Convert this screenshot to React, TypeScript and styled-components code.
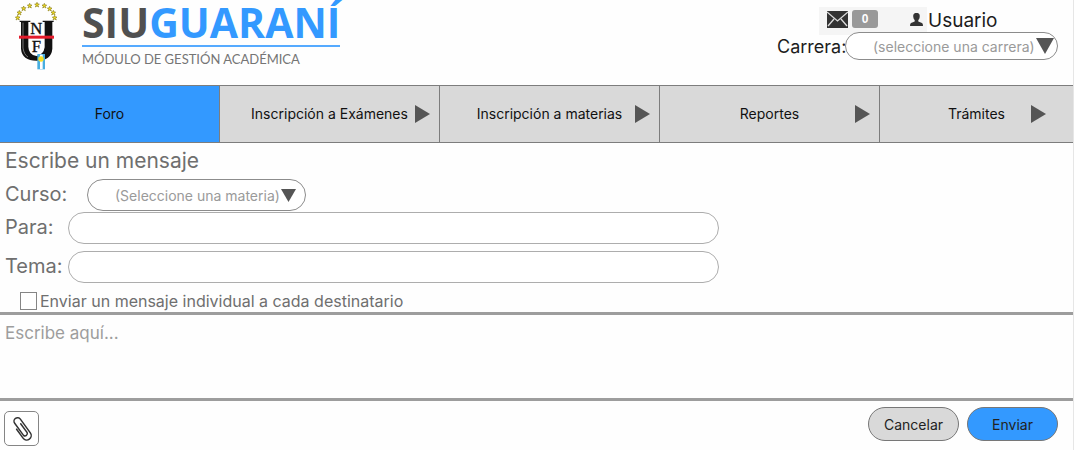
import React from "react";
import styled, { createGlobalStyle } from "styled-components";

const Global = createGlobalStyle`
  *, *::before, *::after { box-sizing: border-box; }
  body { margin: 0; background: #fefefe; font-family: Inter, "Liberation Sans", sans-serif; }
  button, input, select, textarea { font: inherit; color: inherit; }
`;

const Page = styled.div`
  min-height: 100vh;
  display: flex;
  flex-direction: column;
  border-right: 1px solid #e6e6e6;
  color: #6f6f6f;
`;

const Header = styled.header`
  display: flex;
  justify-content: space-between;
  align-items: flex-start;
  min-height: 85px;
  padding-right: 15px;
`;

const Brand = styled.a`
  display: flex;
  gap: 12px;
  padding-left: 10px;
  color: #505050;
  text-decoration: none;
`;

const BrandText = styled.div`
  font-family: "Open Sans", sans-serif;
`;

const BrandName = styled.div`
  font-size: 41px;
  font-weight: 700;
  line-height: 45px;
  border-bottom: 2px solid #55aaff;
  span { color: #3399ff; }
`;

const BrandCaption = styled.div`
  font-family: Lato, sans-serif;
  font-size: 13px;
  line-height: 24px;
  color: #757575;
`;

const Account = styled.div`
  padding-top: 7px;
  color: #1c1c1c;
  font-size: 18px;
`;

const UserRow = styled.div`
  display: flex;
  align-items: center;
  padding-left: 42px;
`;

const Status = styled.div`
  display: flex;
  align-items: center;
  gap: 4px;
  width: 108px;
  height: 28px;
  padding: 0 4px 4px 8px;
  background: #f5f5f5;
  color: #333;
`;

const Badge = styled.span`
  width: 26px;
  border-radius: 3px;
  background: #999;
  color: #fff;
  font-family: "Liberation Sans", sans-serif;
  font-size: 12px;
  font-weight: 700;
  line-height: 18px;
  text-align: center;
`;

const UserIcon = styled.svg`
  margin-left: auto;
`;

const UserLink = styled.a`
  padding-left: 1px;
  font-size: 19px;
  line-height: 26px;
  color: inherit;
  text-decoration: none;
`;

const CareerRow = styled.div`
  display: flex;
  align-items: center;
  margin-top: -3px;
  label { width: 68px; }
`;

const SelectBox = styled.div<{ $width: number; $height: number; $inset: number }>`
  display: grid;
  align-items: center;
  width: ${(p) => p.$width}px;
  height: ${(p) => p.$height}px;
  > * { grid-area: 1 / 1; }
  > svg { justify-self: end; margin-right: ${(p) => p.$inset}px; pointer-events: none; }
`;

const Select = styled.select`
  appearance: none;
  width: 100%;
  height: 100%;
  padding: 0 20px 0 27px;
  border: 1px solid #8c8c8c;
  border-radius: 16px;
  background: #fff;
  color: #9a9a9a;
  font-size: 14px;
`;

const Nav = styled.nav`
  display: grid;
  grid-template-columns: 220fr 220fr 220fr 220fr 193fr;
  border: solid #7d7d7d;
  border-width: 1px 0;
`;

const Tab = styled.button<{ $active?: boolean; $inset?: number }>`
  display: grid;
  grid-template-columns: 1fr auto 1fr;
  align-items: center;
  height: 56px;
  padding: 0;
  border: 0;
  border-right: 1px solid #7d7d7d;
  background: ${(p) => (p.$active ? "#3399ff" : "#d9d9d9")};
  color: #111;
  font-size: 14px;
  span { grid-column: 2; padding-bottom: 2px; }
  svg { justify-self: end; margin-right: ${(p) => p.$inset ?? 9}px; }
  &:last-child { border-right: 0; }
`;

const Form = styled.form`
  flex: 1;
  display: flex;
  flex-direction: column;
`;

const Title = styled.h1`
  margin: 6px 0;
  padding-left: 5px;
  font-size: 21px;
  font-weight: 400;
  line-height: 24px;
`;

const Field = styled.div<{ $label: number; $gap: number }>`
  display: flex;
  align-items: center;
  height: 32px;
  margin-bottom: ${(p) => p.$gap}px;
  padding-left: 5px;
  font-size: 20px;
  label { width: ${(p) => p.$label}px; padding-bottom: 2px; }
`;

const TextInput = styled.input`
  flex: 1;
  max-width: 651px;
  height: 32px;
  padding: 0 16px;
  border: 1px solid #adadad;
  border-radius: 16px;
  background: #fff;
  font-size: 16px;
`;

const CheckRow = styled.div`
  display: flex;
  align-items: center;
  gap: 3px;
  padding: 0 0 2px 20px;
  font-size: 16px;
  line-height: 18px;
`;

const Checkbox = styled.input`
  appearance: none;
  width: 17px;
  height: 18px;
  margin: 0;
  border: 1px solid #858585;
  background: #fff;
  &:checked { background: #3399ff; }
`;

const Message = styled.textarea`
  flex: 1;
  min-height: 89px;
  padding: 6px 5px;
  border: solid #9d9d9d;
  border-width: 3px 0;
  background: transparent;
  font-size: 17px;
  line-height: 24px;
  resize: none;
  &::placeholder { color: #9d9d9d; }
`;

const Actions = styled.footer`
  display: flex;
  gap: 8px;
  padding: 6px 15px 4px 4px;
`;

const AttachButton = styled.button`
  display: grid;
  place-items: center;
  align-self: flex-end;
  width: 35px;
  height: 35px;
  margin: 4px auto 0 0;
  padding: 0;
  border: 1px solid #858585;
  border-radius: 5px;
  background: #fff;
`;

const PillButton = styled.button<{ $primary?: boolean }>`
  width: 91px;
  height: 34px;
  padding: 0;
  border: 1px solid #777;
  border-radius: 17px;
  background: ${(p) => (p.$primary ? "#3399ff" : "#d9d9d9")};
  color: #222;
  font-size: 14px;
`;

const stars = [
  [23, 53], [28, 38], [41, 25], [59, 17], [81, 14], [103, 17], [119, 26], [130, 38], [134, 53],
];

const Emblem = () => (
  <svg width="60" height="76" viewBox="0 0 180 228" aria-hidden="true">
    {stars.map(([x, y]) => (
      <path
        key={x}
        transform={`translate(${x} ${y})`}
        d="M0-7L2-2L7-2L3 2L5 7L0 4L-5 7L-3 2L-7-2L-2-2Z"
        fill="#ecd820"
        stroke="#8f8420"
        strokeWidth="2"
      />
    ))}
    <path
      d="M29 62H61V66H55V140Q56 164 79 168Q101 164 104 142V66H98V62H131V66H127V146Q124 182 80 182Q36 182 33 146V66H29Z"
      fill="#111"
    />
    <path d="M39 68V144Q42 164 54 171" fill="none" stroke="#777" strokeWidth="3" />
    <g fill="#111" stroke="#111" strokeWidth="1" fontFamily="Liberation Serif, serif" textAnchor="middle">
      <text x="79" y="101" fontSize="50">N</text>
      <text x="79" y="157" fontSize="50">F</text>
    </g>
    <rect x="27" y="107" width="105" height="9" fill="#e31b2c" />
    <path d="M82 162H105V208H82Z" fill="#48aee0" />
    <path d="M90 164H98V207H90Z" fill="#fff" />
    <circle cx="93" cy="177" r="8" fill="#f7df20" />
  </svg>
);

const Right = () => (
  <svg width="15" height="18" viewBox="0 0 15 18" aria-hidden="true">
    <path d="M0 0L15 9L0 18Z" fill="#555" />
  </svg>
);

const Down = ({ size }: { size: number }) => (
  <svg width={size} height={size - 2} viewBox="0 0 18 16" preserveAspectRatio="none" aria-hidden="true">
    <path d="M0 0H18L9 16Z" fill="#555" />
  </svg>
);

const tabs = [
  { name: "Inscripción a Exámenes" },
  { name: "Inscripción a materias" },
  { name: "Reportes" },
  { name: "Trámites", inset: 27 },
];

export default function App() {
  return (
    <Page>
      <Global />
      <Header>
        <Brand href="#">
          <Emblem />
          <BrandText>
            <BrandName>SIU<span>GUARANÍ</span></BrandName>
            <BrandCaption>MÓDULO DE GESTIÓN ACADÉMICA</BrandCaption>
          </BrandText>
        </Brand>
        <Account>
          <UserRow>
            <Status>
              <svg width="21" height="17" viewBox="0 0 21 17" aria-label="Mensajes">
                <path d="M0 0H21V17H0Z" fill="#333" />
                <path d="M0 1L10.500 10L21 1M1 15L7 8M20 15L14 8" fill="none" stroke="#ddd" strokeWidth="1.300" />
              </svg>
              <Badge>0</Badge>
              <UserIcon width="13" height="13" viewBox="0 0 13 13" aria-hidden="true">
                <path d="M6.500 0C9.500 0 10 2 9.700 4C9.500 5.500 9 6.500 8.300 7V8.500L12 10Q13 10.500 13 13H0Q0 10.500 1 10L4.700 8.500V7C4 6.500 3.500 5.500 3.300 4C3 2 3.500 0 6.500 0Z" fill="#333" />
              </UserIcon>
            </Status>
            <UserLink href="#">Usuario</UserLink>
          </UserRow>
          <CareerRow>
            <label htmlFor="career">Carrera:</label>
            <SelectBox $width={213} $height={28} $inset={4}>
              <Select id="career">
                <option>(seleccione una carrera)</option>
              </Select>
              <Down size={18} />
            </SelectBox>
          </CareerRow>
        </Account>
      </Header>
      <Nav>
        <Tab $active><span>Foro</span></Tab>
        {tabs.map((t) => (
          <Tab key={t.name} $inset={t.inset}>
            <span>{t.name}</span>
            <Right />
          </Tab>
        ))}
      </Nav>
      <Form onSubmit={(e) => e.preventDefault()}>
        <Title>Escribe un mensaje</Title>
        <Field $label={82} $gap={1}>
          <label htmlFor="course">Curso:</label>
          <SelectBox $width={219} $height={32} $inset={10}>
            <Select id="course">
              <option>(Seleccione una materia)</option>
            </Select>
            <Down size={15} />
          </SelectBox>
        </Field>
        <Field $label={63} $gap={7}>
          <label htmlFor="to">Para:</label>
          <TextInput id="to" />
        </Field>
        <Field $label={63} $gap={9}>
          <label htmlFor="subject">Tema:</label>
          <TextInput id="subject" />
        </Field>
        <CheckRow>
          <Checkbox type="checkbox" id="single" />
          <label htmlFor="single">Enviar un mensaje individual a cada destinatario</label>
        </CheckRow>
        <Message aria-label="Mensaje" placeholder="Escribe aquí..." />
        <Actions>
          <AttachButton type="button" aria-label="Adjuntar archivo">
            <svg width="24" height="28" viewBox="-12 -14 24 28" fill="none" stroke="#333" strokeWidth="1.500" strokeLinecap="round" aria-hidden="true">
              <path transform="rotate(-36)" d="M-4.500 -3V8A4.500 4.500 0 0 0 4.500 8V-9A3.500 3.500 0 0 0 -2.500 -9V6A2.300 2.300 0 0 0 2 6V-5" />
            </svg>
          </AttachButton>
          <PillButton type="button">Cancelar</PillButton>
          <PillButton type="submit" $primary>Enviar</PillButton>
        </Actions>
      </Form>
    </Page>
  );
}
